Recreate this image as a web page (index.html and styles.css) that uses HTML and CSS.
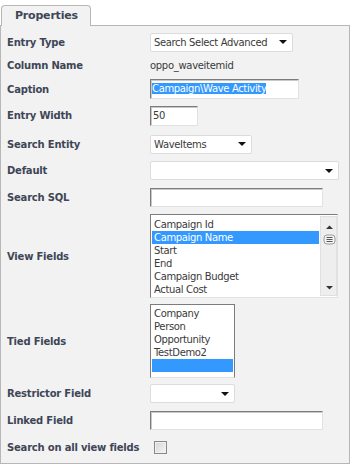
FILE: index.html
```html
<!DOCTYPE html>
<html lang="en">
<head>
  <meta charset="UTF-8">
  <title>Properties</title>
  <link rel="stylesheet" href="styles.css">
</head>
<body>
  <div class="props">
    <div class="tab">Properties</div>
    <div class="panel">
      <div class="form">
        <div class="label">Entry Type</div>
        <div class="select w-type"><span>Search Select Advanced</span></div>

        <div class="label">Column Name</div>
        <div class="value">oppo_waveitemid</div>

        <div class="label">Caption</div>
        <div class="input w-caption"><span class="sel">Campaign\Wave Activity</span></div>

        <div class="label">Entry Width</div>
        <div class="input w-width">50</div>

        <div class="label">Search Entity</div>
        <div class="select w-entity"><span>WaveItems</span></div>

        <div class="label">Default</div>
        <div class="select w-default"><span></span></div>

        <div class="label">Search SQL</div>
        <div class="input w-sql"></div>

        <div class="label">View Fields</div>
        <div class="list w-view">
          <ul class="items">
            <li>Campaign Id</li>
            <li class="on">Campaign Name</li>
            <li>Start</li>
            <li>End</li>
            <li>Campaign Budget</li>
            <li>Actual Cost</li>
          </ul>
          <div class="scrollbar">
            <svg width="17" height="80" viewBox="0 0 17 80">
              <path d="M5 12 L8.5 8.5 L12 12 Z" fill="#333"/>
              <rect x="3" y="18" width="11" height="9" rx="3" fill="#f4f4f4" stroke="#9a9a9a"/>
              <path d="M5.5 20.5 H11.5 M5.5 22.5 H11.5 M5.5 24.5 H11.5" stroke="#555" stroke-width="1"/>
              <path d="M5 69 L8.5 72.5 L12 69 Z" fill="#333"/>
            </svg>
          </div>
        </div>

        <div class="label">Tied Fields</div>
        <div class="list w-tied">
          <ul class="items">
            <li>Company</li>
            <li>Person</li>
            <li>Opportunity</li>
            <li>TestDemo2</li>
            <li class="on">&nbsp;</li>
          </ul>
        </div>

        <div class="label">Restrictor Field</div>
        <div class="select w-restrict"><span></span></div>

        <div class="label">Linked Field</div>
        <div class="input w-sql"></div>

        <div class="label">Search on all view fields</div>
        <div><span class="checkbox"></span></div>
      </div>
    </div>
  </div>
</body>
</html>
```

FILE: styles.css
```css
body {
  margin: 0;
  background: #fff;
  font-family: "DejaVu Sans", "Liberation Sans", sans-serif;
  color: #3a3a3a;
}
.props {
  width: 350px;
  padding-top: 5px;
}
.tab {
  position: relative;
  z-index: 1;
  box-sizing: border-box;
  width: 90px;
  height: 21px;
  margin-left: 1px;
  margin-bottom: -1px;
  padding-left: 13px;
  border: 1px solid #b7b7b7;
  border-bottom: none;
  border-radius: 4px 4px 0 0;
  background: #f2f2f2;
  color: #3e4656;
  font-size: 11px;
  font-weight: bold;
  letter-spacing: -0.2px;
  line-height: 19px;
}
.panel {
  box-sizing: border-box;
  width: 350px;
  height: 439px;
  padding: 4px 0 0 6px;
  border: 1px solid #b7b7b7;
  background: #f2f2f2;
}
.form {
  display: grid;
  grid-template-columns: 143px 1fr;
  grid-template-rows: 24px 23px 24px 29px 28px 25px 28px 90px 80px 25px 28px 26px;
  align-items: center;
}
.label {
  color: #3e4656;
  font-size: 10px;
  font-weight: bold;
  letter-spacing: -0.2px;
}
.value {
  font-size: 10px;
  letter-spacing: -0.3px;
}
.select {
  box-sizing: border-box;
  height: 19px;
  display: flex;
  align-items: center;
  justify-content: space-between;
  padding: 0 5px 0 3px;
  border: 1px solid #dcdcdc;
  border-radius: 2px;
  background: #fff;
  font-size: 10px;
  letter-spacing: -0.35px;
}
.select::after {
  content: "";
  border-left: 4px solid transparent;
  border-right: 4px solid transparent;
  border-top: 4px solid #111;
}
.w-type { width: 143px; }
.w-entity { width: 102px; }
.w-default { width: 189px; }
.w-restrict { width: 85px; }
.input {
  box-sizing: border-box;
  height: 20px;
  padding: 2px 1px;
  border: 1px solid;
  border-color: #7c7c7c #e2e2e2 #e2e2e2 #7c7c7c;
  box-shadow: inset 1px 1px 0 #c8c8c8;
  background: #fff;
  font-size: 10px;
  letter-spacing: -0.35px;
  line-height: 14px;
}
.w-caption { width: 149px; }
.w-width { width: 48px; padding-left: 2px; }
.w-sql { width: 173px; height: 19px; }
.sel {
  background: #3399ff;
  color: #fff;
}
.list {
  box-sizing: border-box;
  display: flex;
  border: 1px solid;
  border-color: #7c7c7c #e2e2e2 #e2e2e2 #7c7c7c;
  background: #fff;
}
.w-view { width: 188px; height: 84px; }
.w-tied { width: 85px; height: 74px; border-right-color: #7c7c7c; }
.items {
  flex: 1;
  margin: 0;
  padding: 3px 1px 0 1px;
  list-style: none;
  font-size: 10px;
  letter-spacing: -0.35px;
  line-height: 13px;
  overflow: hidden;
}
.w-tied .items {
  padding-top: 2px;
}
.items li {
  padding-left: 2px;
  white-space: nowrap;
}
.items li.on {
  background: #3399ff;
  color: #fff;
}
.scrollbar {
  width: 17px;
  margin: 1px 0 1px;
  border: 1px solid #e0e0e0;
  box-sizing: border-box;
  background: #eeeeee;
}
.scrollbar svg {
  display: block;
}
.checkbox {
  display: block;
  box-sizing: border-box;
  width: 13px;
  height: 13px;
  margin-left: 4px;
  border: 1px solid #8a8a8a;
  background: linear-gradient(135deg, #d6d6d6, #f6f6f6);
  box-shadow: inset 0 0 0 1px #f0f0f0;
}
```
